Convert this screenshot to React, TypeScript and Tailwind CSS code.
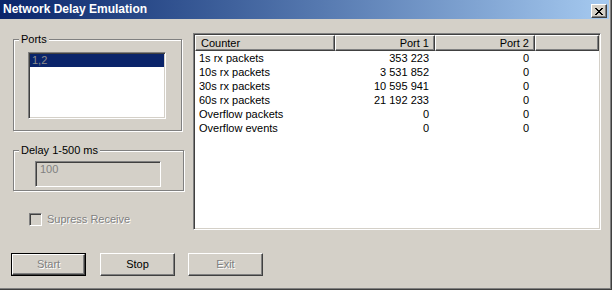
import React from 'react'

const rows = [
  { name: '1s rx packets', p1: '353 223', p2: '0' },
  { name: '10s rx packets', p1: '3 531 852', p2: '0' },
  { name: '30s rx packets', p1: '10 595 941', p2: '0' },
  { name: '60s rx packets', p1: '21 192 233', p2: '0' },
  { name: 'Overflow packets', p1: '0', p2: '0' },
  { name: 'Overflow events', p1: '0', p2: '0' },
]

const sunken =
  'border border-t-[#808080] border-l-[#808080] border-b-white border-r-white shadow-[inset_1px_1px_0_#404040,inset_-1px_-1px_0_#d4d0c8]'
const raised =
  'border border-t-white border-l-white border-b-[#404040] border-r-[#404040] shadow-[inset_-1px_-1px_0_#808080]'
const etched = 'border border-[#808080] shadow-[inset_1px_1px_0_#fff,1px_1px_0_#fff]'
const disabledText = 'text-[#808080] [text-shadow:1px_1px_0_#fff]'

const CloseGlyph = () => (
  <svg width="8" height="7" viewBox="0 0 8 7" shapeRendering="crispEdges">
    <path
      d="M0 0h2v1h-2zM6 0h2v1h-2zM1 1h2v1h-2zM5 1h2v1h-2zM2 2h4v1h-4zM3 3h2v1h-2zM2 4h4v1h-4zM1 5h2v1h-2zM5 5h2v1h-2zM0 6h2v1h-2zM6 6h2v1h-2z"
      fill="#000"
    />
  </svg>
)

const Button: React.FC<{ label: string; disabled?: boolean; isDefault?: boolean; className?: string }> = ({
  label,
  disabled,
  isDefault,
  className = '',
}) => {
  const inner = (
    <div className={`flex-1 flex items-center justify-center ${raised} ${disabled ? disabledText : 'text-black'}`}>
      {label}
    </div>
  )
  return isDefault ? (
    <div className={`w-[75px] h-[23px] flex border border-black ${className}`}>{inner}</div>
  ) : (
    <div className={`w-[75px] h-[23px] flex ${className}`}>{inner}</div>
  )
}

export default function App() {
  return (
    <div className="w-[612px] h-[290px] bg-[#d4d0c8] border-r border-b border-[#404040] shadow-[inset_-1px_-1px_0_#808080] flex flex-col overflow-hidden text-[11px] text-black font-['Liberation_Sans',Arial,sans-serif] select-none">
      {/* title bar */}
      <div className="h-[19px] mr-[2px] flex items-start justify-between bg-gradient-to-r from-[#0a246a] to-[#a6caf0]">
        <span className="pl-[3px] leading-[19px] text-[12px] font-bold text-white">Network Delay Emulation</span>
        <div className={`mt-[4px] mr-[2px] w-[16px] h-[14px] bg-[#d4d0c8] flex items-center justify-center ${raised}`}>
          <CloseGlyph />
        </div>
      </div>

      <div className="flex items-start pt-[14px]">
        {/* left column */}
        <div className="ml-[13px] w-[171px] flex flex-col">
          <fieldset className={`w-[169px] pb-[11px] ${etched}`}>
            <legend className="ml-[5px] px-[2px] leading-[13px] bg-[#d4d0c8]">Ports</legend>
            <div className={`ml-[14px] mt-[6px] w-[138px] h-[67px] bg-white p-[1px] ${sunken}`}>
              <div className="h-[13px] leading-[13px] pl-[2px] bg-[#0a246a] text-[#8c8c8c]">1,2</div>
            </div>
          </fieldset>

          <fieldset className={`mt-[13px] w-[171px] pb-[3px] ${etched}`}>
            <legend className="ml-[5px] px-[2px] leading-[13px] bg-[#d4d0c8]">Delay 1-500 ms</legend>
            <div className={`ml-[21px] mt-[4px] w-[126px] h-[26px] pl-[4px] pt-[1px] leading-[13px] text-[#808080] ${sunken}`}>
              100
            </div>
          </fieldset>

          <div className="mt-[22px] ml-[16px] flex items-center h-[13px]">
            <div className={`w-[13px] h-[13px] ${sunken}`} />
            <span className={`ml-[5px] ${disabledText}`}>Supress Receive</span>
          </div>
        </div>

        {/* counters list view */}
        <div className={`ml-[9px] w-[408px] h-[197px] bg-white p-[1px] flex flex-col ${sunken}`}>
          <div className="flex h-[16px] leading-[14px] bg-[#d4d0c8]">
            <div className={`w-[140px] pl-[5px] ${raised}`}>Counter</div>
            <div className={`w-[100px] pr-[5px] text-right ${raised}`}>Port 1</div>
            <div className={`w-[100px] pr-[5px] text-right ${raised}`}>Port 2</div>
            <div className={`flex-1 ${raised}`} />
          </div>
          {rows.map((r) => (
            <div key={r.name} className="flex h-[14px] leading-[14px]">
              <div className="w-[140px] pl-[4px]">{r.name}</div>
              <div className="w-[100px] pr-[6px] text-right">{r.p1}</div>
              <div className="w-[100px] pr-[6px] text-right">{r.p2}</div>
            </div>
          ))}
        </div>
      </div>

      {/* buttons */}
      <div className="flex mt-[23px] pl-[11px]">
        <Button label="Start" disabled isDefault />
        <Button label="Stop" className="ml-[14px]" />
        <Button label="Exit" disabled className="ml-[13px]" />
      </div>
    </div>
  )
}
